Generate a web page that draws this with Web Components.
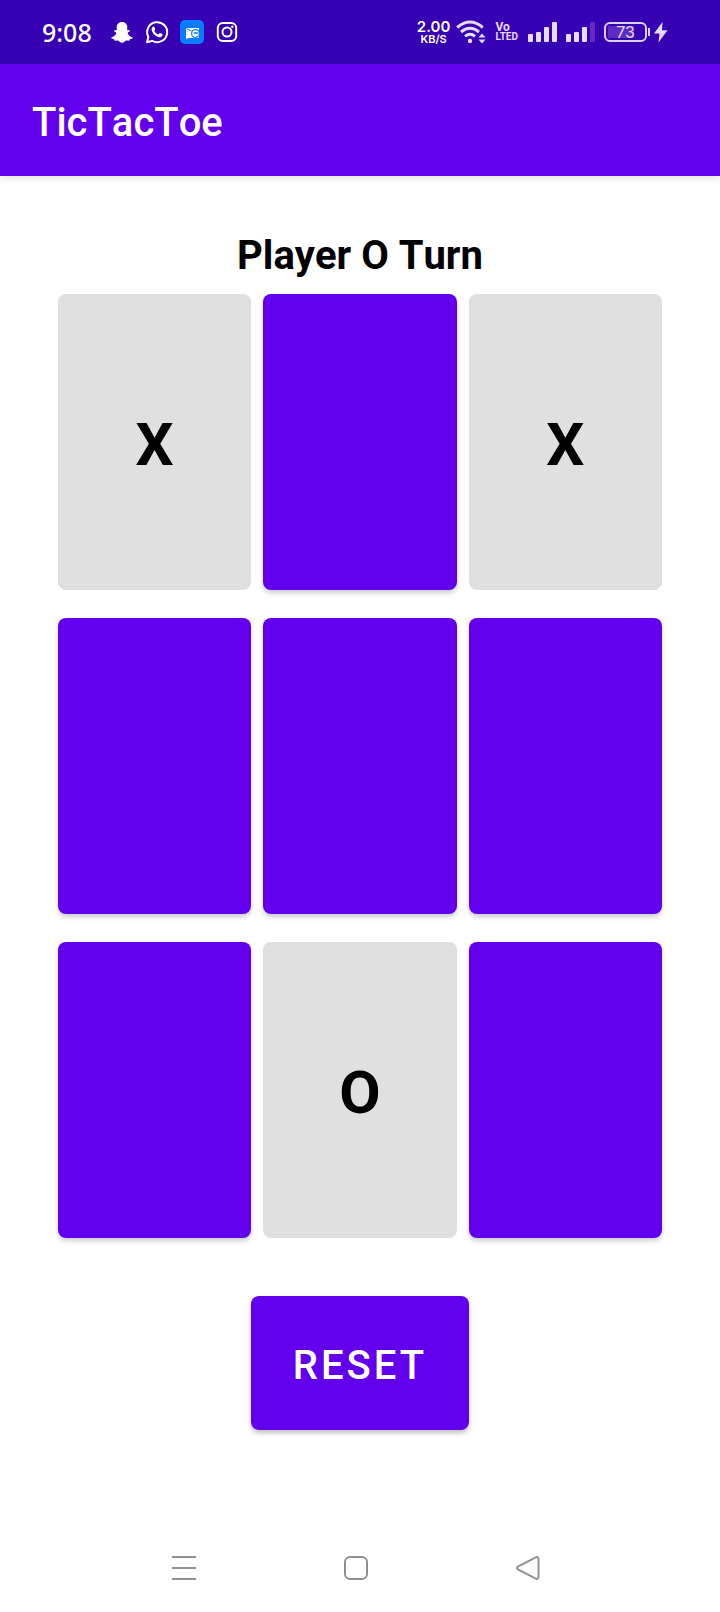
<!DOCTYPE html>
<html lang="en">
<head>
<meta charset="utf-8">
<meta name="viewport" content="width=device-width, initial-scale=1">
<title>TicTacToe</title>
<style>
  html, body { margin: 0; background: #fff; }
  body { font-family: Roboto, "Noto Sans", sans-serif; color: #000; font-kerning: none; }
</style>
</head>
<body>
<tic-app>
  <status-bar slot="status" time="9:08" rate="2.00" unit="KB/S" level="73"></status-bar>
  <app-bar slot="bar">TicTacToe</app-bar>
  <turn-label>Player O Turn</turn-label>
  <game-board marks="X-X----O-"></game-board>
  <reset-button>RESET</reset-button>
  <nav-bar slot="nav"></nav-bar>
</tic-app>

<script>
const define = (name, render) => customElements.define(name, class extends HTMLElement {
  connectedCallback() {
    if (this.shadowRoot) return;
    this.attachShadow({ mode: "open" }).innerHTML = render(this);
  }
});

define("tic-app", () => `
  <style>
    :host { display: flex; flex-direction: column; min-height: 100vh; }
    main { flex: 1; display: flex; flex-direction: column; padding: 56px 58px; }
  </style>
  <slot name="status"></slot>
  <slot name="bar"></slot>
  <main><slot></slot></main>
  <slot name="nav"></slot>
`);

define("status-icons", () => `
  <style>
    :host { display: flex; align-items: center; gap: 11px; }
    svg { display: block; width: 24px; height: 24px; }
  </style>
  <svg viewBox="0 0 24 24" aria-label="Snapchat"><path fill="#fff" d="M12 2C8.500 2 6.600 4.600 6.700 7.600L6.800 10C5.800 10.500 4.800 9.800 4.200 10.500C3.500 11.600 6 12.200 6.200 12.800C6.400 14.500 4 16.700 1.800 17.200C1.100 17.500 1 18.200 1.800 18.600L4.100 19.300L4.700 20.700L7.600 20.500C9 20.900 10 22.800 12 22.800S15 20.900 16.400 20.500L19.300 20.700L19.900 19.300L22.200 18.600C23 18.200 22.900 17.500 22.200 17.200C20 16.700 17.600 14.500 17.800 12.800C18 12.200 20.500 11.600 19.800 10.500C19.200 9.800 18.200 10.500 17.200 10L17.300 7.600C17.400 4.600 15.500 2 12 2Z"/></svg>
  <svg viewBox="0 0 24 24" aria-label="WhatsApp"><path fill="none" stroke="#fff" stroke-width="2" stroke-linejoin="round" d="M2 22.300L3.400 17A10 10 0 1 1 7.300 20.900Z"/><path fill="#fff" d="M7.900 6.700C8.700 6.200 9.300 6.500 9.500 7.200L10.200 9C10.400 9.700 9.400 10.300 9.300 10.800C10.100 12.500 11.400 13.600 13.200 14.400C13.800 14.300 14.300 13 14.900 13L17.200 14.100C17.900 14.500 17.500 15.900 16.800 16.600C13.500 19.100 6.600 13.600 6.600 9.200C6.600 8 7.300 7.100 7.900 6.700Z"/></svg>
  <svg viewBox="0 0 24 24" aria-label="Messages"><rect width="24" height="24" rx="5" fill="#087cff"/><path fill="#fff" d="M6 8H19V18H9L6 19Z"/><path fill="none" stroke="#087cff" d="M6.500 8.500L11 11"/><circle cx="15.500" cy="13.500" r="4.500" fill="#087cff"/><circle cx="15.500" cy="13.500" r="3.300" fill="#fff"/><path stroke="#087cff" stroke-width="1.500" d="M13.500 13H18"/></svg>
  <svg viewBox="0 0 24 24" aria-label="Instagram" fill="none" stroke="#fff" stroke-width="2"><rect x="2.800" y="3" width="18.400" height="18" rx="5"/><circle cx="12" cy="12" r="4.500"/><circle cx="17.300" cy="6.800" r="1.200" fill="#fff" stroke="none"/></svg>
`);

define("battery-level", el => `
  <style>
    :host { display: flex; align-items: center; }
    .cell { box-sizing: border-box; width: 43px; height: 20px; border: 2px solid #ddd0ff; border-radius: 6px;
      display: flex; align-items: center; justify-content: center; font: 400 16px/16px Inter, sans-serif; color: #e6dcff;
      background: linear-gradient(#5c2cc4, #5c2cc4) 2px 2px / 26px 12px no-repeat; }
    svg { display: block; }
  </style>
  <span class="cell">${el.getAttribute("level")}</span>
  <svg width="21" height="22" viewBox="0 0 21 22" aria-label="Charging"><path d="M2 7V15" stroke="#ddd0ff" stroke-width="2"/><path fill="#e6dcff" d="M15.500 1L7 12.500H12.500L11.500 21.500L20.500 9.300H15Z"/></svg>
`);

define("status-bar", el => `
  <style>
    :host { display: flex; align-items: center; justify-content: space-between; box-sizing: border-box; min-height: 64px;
      padding: 0 52px 0 42px; background: #3700b3; color: #fff; }
    .side { display: flex; align-items: center; }
    time { font: 500 25px/32px "Noto Sans", sans-serif; margin-right: 18px; }
    .rate { display: flex; flex-direction: column; align-items: center; font: 600 15px/15px Inter, sans-serif; margin-right: 6px; }
    .rate small { font: 600 11px/11px Inter, sans-serif; }
    .volte { font: 700 12px/10px "Liberation Sans Narrow", Roboto, sans-serif; color: #e6dcff; margin: 0 10px 0 9px; }
    .volte small { display: block; font: 700 10px/10px "Liberation Sans Narrow", Roboto, sans-serif; }
    svg { display: block; }
    .bars { margin-right: 9px; }
  </style>
  <div class="side"><time>${el.getAttribute("time")}</time><status-icons></status-icons></div>
  <div class="side">
    <span class="rate"><span>${el.getAttribute("rate")}</span><small>${el.getAttribute("unit")}</small></span>
    <svg width="30" height="24" viewBox="0 0 30 24" aria-label="Wi-Fi"><g fill="none" stroke="#e6dcff" stroke-width="3"><path d="M1.200 7.500Q14 -3.500 26.800 7.500"/><path d="M5 12Q14 4.500 23 12"/><path d="M9 16.300Q14 12.300 19 16.300"/></g><circle cx="14" cy="21" r="2.200" fill="#e6dcff"/><path fill="#e6dcff" d="M22.500 17.500L26 13.500L29.500 17.500ZM22.500 19.500H29.500L26 23.500Z"/></svg>
    <span class="volte">Vo<small>LTED</small></span>
    <svg class="bars" width="29" height="22" viewBox="0 0 29 22" fill="#e6dcff" aria-label="Signal 1"><rect y="13" width="5" height="8" rx="1"/><rect x="8" y="11" width="5" height="10" rx="1"/><rect x="16" y="6" width="5" height="15" rx="1"/><rect x="24" y="1" width="5" height="20" rx="1"/></svg>
    <svg class="bars" width="29" height="22" viewBox="0 0 29 22" fill="#e6dcff" aria-label="Signal 2"><rect y="13" width="5" height="8" rx="1"/><rect x="8" y="11" width="5" height="10" rx="1"/><rect x="16" y="6" width="5" height="15" rx="1"/><rect x="24" y="1" width="5" height="20" rx="1" fill="#5c2cc4"/></svg>
    <battery-level level="${el.getAttribute("level")}"></battery-level>
  </div>
`);

define("app-bar", () => `
  <style>
    :host { display: flex; align-items: center; box-sizing: border-box; min-height: 112px; padding: 6px 32px 0;
      background: #6200ee; color: #fff; box-shadow: 0 2px 8px rgba(0,0,0,.12); }
    h1 { margin: 0; font-size: 40px; line-height: 48px; font-weight: 500; }
  </style>
  <h1><slot></slot></h1>
`);

define("turn-label", () => `
  <style>
    :host { display: block; margin-bottom: 14px; text-align: center; }
    h2 { margin: 0; font-size: 40px; line-height: 48px; font-weight: 700; }
  </style>
  <h2><slot></slot></h2>
`);

define("game-board", el => `
  <style>
    :host { display: grid; grid-template-columns: repeat(3, 1fr); gap: 28px 12px; }
    button { height: 296px; margin: 0; padding: 6px 0 0; border: 0; border-radius: 8px; background: #6200ee; color: #000;
      font: 700 60px/72px Roboto, sans-serif; box-shadow: 0 3px 5px rgba(0,0,0,.2); }
    button:disabled { background: #e0e0e0; color: #000; box-shadow: none; }
  </style>
  ${[...el.getAttribute("marks")].map((m, i) => m === "-"
    ? `<button type="button" aria-label="Square ${i + 1}"></button>`
    : `<button type="button" disabled>${m}</button>`).join("")}
`);

define("reset-button", () => `
  <style>
    :host { display: flex; justify-content: center; margin-top: 58px; }
    button { min-width: 218px; height: 134px; margin: 0; padding: 6px 32px 0; border: 0; border-radius: 8px; background: #6200ee; color: #fff;
      font: 500 40px/48px Roboto, sans-serif; letter-spacing: 3px; box-shadow: 0 3px 5px rgba(0,0,0,.25); }
  </style>
  <button type="button"><slot></slot></button>
`);

define("nav-bar", () => `
  <style>
    :host { display: block; }
    nav { display: grid; grid-template-columns: repeat(3, 1fr); padding: 0 106px 0 98px; }
    button { display: flex; align-items: center; justify-content: center; height: 88px; margin: 0; padding: 0; border: 0; background: none; }
    svg { display: block; fill: none; stroke: #929292; stroke-width: 2; }
  </style>
  <nav>
    <button type="button" aria-label="Recents"><svg width="24" height="24"><path d="M0 1H24M0 12H24M0 23H24"/></svg></button>
    <button type="button" aria-label="Home"><svg width="24" height="24"><rect x="1" y="1" width="22" height="22" rx="5"/></svg></button>
    <button type="button" aria-label="Back"><svg width="24" height="24"><path stroke-linejoin="round" d="M1.800 10.700L19.800 1.300Q22.500 0.400 22.500 3V21Q22.500 23.600 19.800 22.700L1.800 13.300Q0 12 1.800 10.700Z"/></svg></button>
  </nav>
`);
</script>
</body>
</html>
